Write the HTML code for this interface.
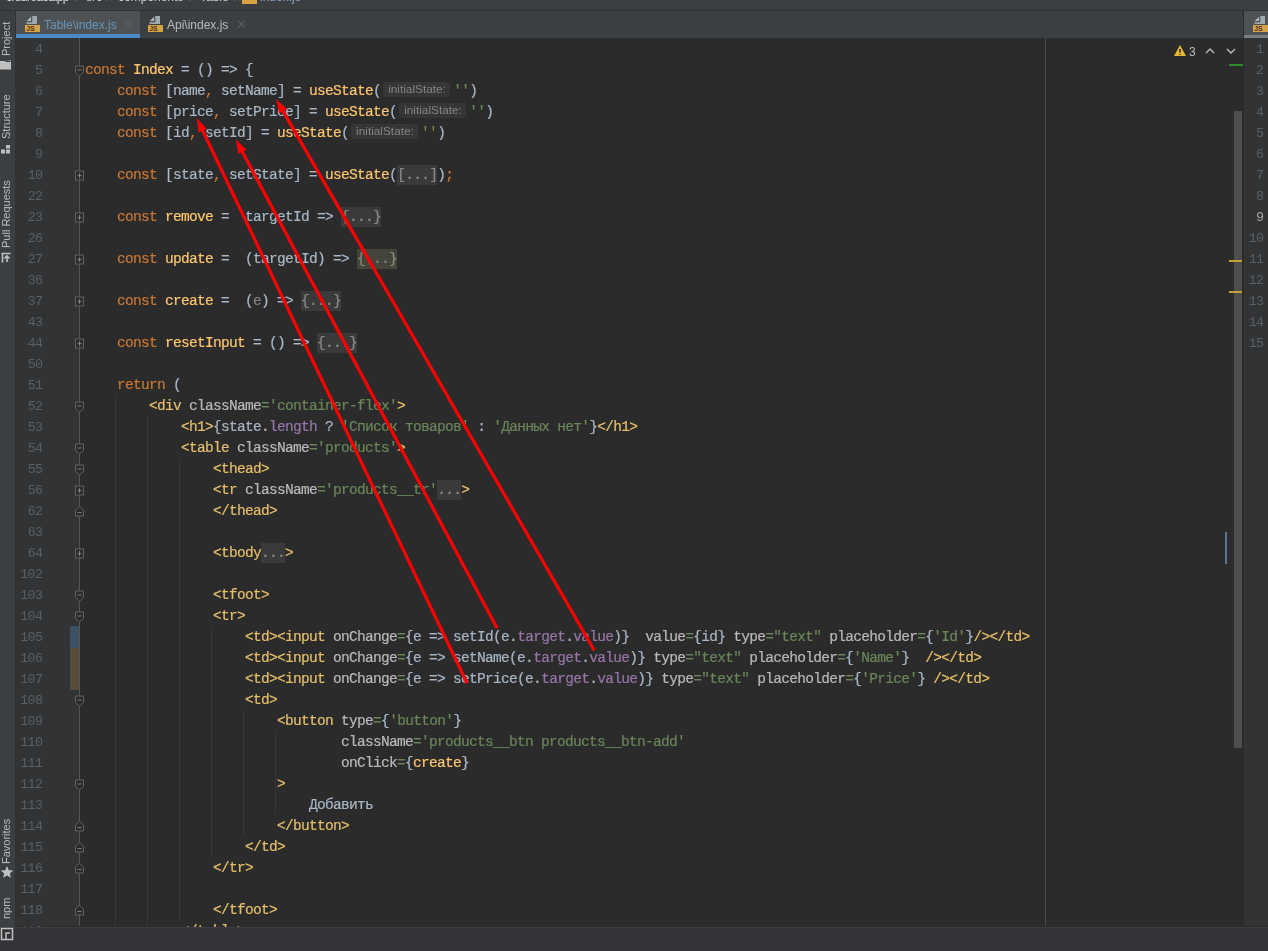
<!DOCTYPE html>
<html><head><meta charset="utf-8"><style>
*{margin:0;padding:0;box-sizing:border-box}
html,body{width:1268px;height:951px;overflow:hidden;background:#2B2B2B}
body{position:relative;font-family:"Liberation Sans",sans-serif} .ln,.num,.rnum,.tab,.side,.abs{will-change:transform}
.abs{position:absolute}
#top{left:0;top:0;width:1268px;height:11px;background:#3C3F41;border-bottom:1px solid #323232;overflow:hidden}
#tabs{left:15px;top:11px;width:1229px;height:27px;background:#3C3F41}
#left{left:0;top:11px;width:16px;height:940px;background:#3C3F41;border-right:1px solid #323232}
#status{left:0;top:927px;width:1268px;height:24px;background:#323437;border-top:1px solid #3A3C3F}
#gutter{left:15px;top:38px;width:64px;height:888px;background:#313335}
#rpane{left:1243px;top:11px;width:25px;height:915px;background:#313335;border-left:1px solid #2B2B2B}
.ln{position:absolute;left:85px;-webkit-text-stroke:0.2px currentColor;height:21px;line-height:21px;white-space:pre;font-family:"Liberation Mono",monospace;font-size:14.5px;letter-spacing:-0.7px}
.num{position:absolute;left:15px;width:27.2px;text-align:right;height:21px;line-height:21px;font-family:"Liberation Mono",monospace;font-size:13.3px;letter-spacing:-0.7px;color:#5C5F61}
.rnum{position:absolute;left:1244px;width:19.3px;text-align:right;height:21px;line-height:21px;font-family:"Liberation Mono",monospace;font-size:13.3px;letter-spacing:-0.7px;color:#5C5F61}
.rnum.cur{color:#A4A3A3}
.k{color:#CC7832} .d{color:#A9B7C6} .f{color:#FFC66D} .s{color:#6A8759} .p{color:#9876AA}
.t{color:#E8BF6A} .a{color:#BABABA} .eq{color:#6A8759} .u{color:#808080}
.fo,.fy{display:inline-block;height:20px;line-height:20px;vertical-align:top} .fo{background:#3A3A3A;color:#8A8A8A}
.fy{background:#45443A;color:#8A8A7A}
.hint{display:inline-block;width:72px;height:21px;vertical-align:top;position:relative}
.hint i{position:absolute;left:2px;top:1px;width:67px;height:15px;line-height:15px;background:#363636;color:#858585;font-style:normal;font-family:"Liberation Sans",sans-serif;font-size:11.8px;letter-spacing:0;padding-left:5px;border-radius:3px;-webkit-text-stroke:0}
.tab{position:absolute;top:12px;height:27px;font-size:12px;line-height:27px}
.side{position:absolute;left:0;width:15px;font-size:11px;color:#BBBBBB;white-space:nowrap}
.side span{position:absolute;transform:rotate(-90deg);transform-origin:0 0;left:0px}
.ic{position:absolute}
</style></head><body>
<div id="top" class="abs"></div>
<div class="abs" style="left:6px;top:-9px;font-size:12px;line-height:12px;color:#D8D8D8;letter-spacing:-0.6px;white-space:pre">crudreactapp</div>
<div class="abs" style="left:75px;top:-9px;font-size:13px;line-height:12px;color:#6A6D70">/</div>
<div class="abs" style="left:86px;top:-9px;font-size:12px;line-height:12px;color:#D0D0D0">src</div>
<div class="abs" style="left:106px;top:-9px;font-size:13px;line-height:12px;color:#6A6D70">/</div>
<div class="abs" style="left:118px;top:-9px;font-size:12px;line-height:12px;color:#D0D0D0">components</div>
<div class="abs" style="left:189px;top:-9px;font-size:13px;line-height:12px;color:#6A6D70">/</div>
<div class="abs" style="left:200px;top:-9px;font-size:12px;line-height:12px;color:#D0D0D0">Table</div>
<div class="abs" style="left:234px;top:-9px;font-size:13px;line-height:12px;color:#6A6D70">/</div>
<div class="abs" style="left:242px;top:-6px;width:15px;height:10px;background:#D9A440"></div>
<div class="abs" style="left:260px;top:-9px;font-size:12px;line-height:12px;color:#8AA8C8">index.js</div>
<div id="tabs" class="abs"></div>
<div id="gutter" class="abs"></div>
<div id="rpane" class="abs"></div>
<div id="left" class="abs"></div>

<!-- active tab -->
<div class="abs" style="left:16px;top:11px;width:124px;height:27px;background:#4E5254"></div>
<div class="abs" style="left:16px;top:34px;width:124px;height:4px;background:#4A88C7"></div>
<svg class="ic" style="left:25px;top:16px" width="16" height="16" viewBox="0 0 16 16"><path d="M7 0H12V8H1.5V5.8H7z" fill="#9DA9B1"/><path d="M1.5 5.3L6.3 0.5V5.3z" fill="#AEB8BE"/><path d="M6.8 0.3V5.8H1.3" stroke="#40464A" stroke-width="0.9" fill="none"/><rect x="0" y="9" width="15" height="7" fill="#D5A24A"/><text x="1.2" y="15" font-family="Liberation Sans" font-size="6.8" font-weight="bold" fill="#4A3210">JS</text></svg>
<div class="tab" style="left:44px;color:#6897BB">Table\index.js</div>
<div class="tab" style="left:123px;top:11px;color:#5A5D60;font-size:13px">&#x2715;</div>
<svg class="ic" style="left:148px;top:16px" width="16" height="16" viewBox="0 0 16 16"><path d="M7 0H12V8H1.5V5.8H7z" fill="#9DA9B1"/><path d="M1.5 5.3L6.3 0.5V5.3z" fill="#AEB8BE"/><path d="M6.8 0.3V5.8H1.3" stroke="#40464A" stroke-width="0.9" fill="none"/><rect x="0" y="9" width="15" height="7" fill="#D5A24A"/><text x="1.2" y="15" font-family="Liberation Sans" font-size="6.8" font-weight="bold" fill="#4A3210">JS</text></svg>
<div class="tab" style="left:167px;color:#BBBBBB">Api\index.js</div>
<div class="tab" style="left:236px;top:11px;color:#5A5D60;font-size:13px">&#x2715;</div>

<!-- right pane tab -->
<div class="abs" style="left:1244px;top:11px;width:24px;height:27px;background:#4E5254"></div>
<div class="abs" style="left:1244px;top:35px;width:24px;height:3px;background:#7B7E80"></div>
<svg class="ic" style="left:1253px;top:16px" width="16" height="16" viewBox="0 0 16 16"><path d="M7 0H12V8H1.5V5.8H7z" fill="#9DA9B1"/><path d="M1.5 5.3L6.3 0.5V5.3z" fill="#AEB8BE"/><path d="M6.8 0.3V5.8H1.3" stroke="#40464A" stroke-width="0.9" fill="none"/><rect x="0" y="9" width="15" height="7" fill="#D5A24A"/><text x="1.2" y="15" font-family="Liberation Sans" font-size="6.8" font-weight="bold" fill="#4A3210">JS</text></svg>

<div class="num" style="top:39px">4</div><div class="num" style="top:60px">5</div><div class="num" style="top:81px">6</div><div class="num" style="top:102px">7</div><div class="num" style="top:123px">8</div><div class="num" style="top:144px">9</div><div class="num" style="top:165px">10</div><div class="num" style="top:186px">22</div><div class="num" style="top:207px">23</div><div class="num" style="top:228px">26</div><div class="num" style="top:249px">27</div><div class="num" style="top:270px">36</div><div class="num" style="top:291px">37</div><div class="num" style="top:312px">43</div><div class="num" style="top:333px">44</div><div class="num" style="top:354px">50</div><div class="num" style="top:375px">51</div><div class="num" style="top:396px">52</div><div class="num" style="top:417px">53</div><div class="num" style="top:438px">54</div><div class="num" style="top:459px">55</div><div class="num" style="top:480px">56</div><div class="num" style="top:501px">62</div><div class="num" style="top:522px">63</div><div class="num" style="top:543px">64</div><div class="num" style="top:564px">102</div><div class="num" style="top:585px">103</div><div class="num" style="top:606px">104</div><div class="num" style="top:627px">105</div><div class="num" style="top:648px">106</div><div class="num" style="top:669px">107</div><div class="num" style="top:690px">108</div><div class="num" style="top:711px">109</div><div class="num" style="top:732px">110</div><div class="num" style="top:753px">111</div><div class="num" style="top:774px">112</div><div class="num" style="top:795px">113</div><div class="num" style="top:816px">114</div><div class="num" style="top:837px">115</div><div class="num" style="top:858px">116</div><div class="num" style="top:879px">117</div><div class="num" style="top:900px">118</div><div class="num" style="top:921px">119</div>
<div class="rnum" style="top:39px">1</div><div class="rnum" style="top:60px">2</div><div class="rnum" style="top:81px">3</div><div class="rnum" style="top:102px">4</div><div class="rnum" style="top:123px">5</div><div class="rnum" style="top:144px">6</div><div class="rnum" style="top:165px">7</div><div class="rnum" style="top:186px">8</div><div class="rnum cur" style="top:207px">9</div><div class="rnum" style="top:228px">10</div><div class="rnum" style="top:249px">11</div><div class="rnum" style="top:270px">12</div><div class="rnum" style="top:291px">13</div><div class="rnum" style="top:312px">14</div><div class="rnum" style="top:333px">15</div>
<svg class="abs" style="left:0;top:0" width="1268" height="951">
<path d="M79.5 38V926" stroke="#555555"/>
<path d="M1045.5 38V926" stroke="#4A4A4A"/>
<path d="M115.5 395V941" stroke="#373737"/><path d="M147.5 416V941" stroke="#373737"/><path d="M179.5 458V920" stroke="#373737"/><path d="M211.5 626V857" stroke="#373737"/><path d="M243.5 710V836" stroke="#373737"/><path d="M275.5 731V815" stroke="#373737"/>
<path d="M75.5 66.0h8v6.5l-4 3.7l-4 -3.7z" fill="#2B2B2B" stroke="#626262"/><path d="M77.5 70.0h4" stroke="#7E7E7E"/><rect x="75.5" y="171.0" width="8" height="9" fill="#2B2B2B" stroke="#626262"/><path d="M77.5 175.5h4M79.5 173.0v5" stroke="#7E7E7E"/><rect x="75.5" y="213.0" width="8" height="9" fill="#2B2B2B" stroke="#626262"/><path d="M77.5 217.5h4M79.5 215.0v5" stroke="#7E7E7E"/><rect x="75.5" y="255.0" width="8" height="9" fill="#2B2B2B" stroke="#626262"/><path d="M77.5 259.5h4M79.5 257.0v5" stroke="#7E7E7E"/><rect x="75.5" y="297.0" width="8" height="9" fill="#2B2B2B" stroke="#626262"/><path d="M77.5 301.5h4M79.5 299.0v5" stroke="#7E7E7E"/><rect x="75.5" y="339.0" width="8" height="9" fill="#2B2B2B" stroke="#626262"/><path d="M77.5 343.5h4M79.5 341.0v5" stroke="#7E7E7E"/><path d="M75.5 402.0h8v6.5l-4 3.7l-4 -3.7z" fill="#2B2B2B" stroke="#626262"/><path d="M77.5 406.0h4" stroke="#7E7E7E"/><path d="M75.5 444.0h8v6.5l-4 3.7l-4 -3.7z" fill="#2B2B2B" stroke="#626262"/><path d="M77.5 448.0h4" stroke="#7E7E7E"/><path d="M75.5 465.0h8v6.5l-4 3.7l-4 -3.7z" fill="#2B2B2B" stroke="#626262"/><path d="M77.5 469.0h4" stroke="#7E7E7E"/><rect x="75.5" y="486.0" width="8" height="9" fill="#2B2B2B" stroke="#626262"/><path d="M77.5 490.5h4M79.5 488.0v5" stroke="#7E7E7E"/><path d="M75.5 516.0h8v-6l-4 -3.7l-4 3.7z" fill="#2B2B2B" stroke="#626262"/><path d="M77.5 512.5h4" stroke="#7E7E7E"/><rect x="75.5" y="549.0" width="8" height="9" fill="#2B2B2B" stroke="#626262"/><path d="M77.5 553.5h4M79.5 551.0v5" stroke="#7E7E7E"/><path d="M75.5 591.0h8v6.5l-4 3.7l-4 -3.7z" fill="#2B2B2B" stroke="#626262"/><path d="M77.5 595.0h4" stroke="#7E7E7E"/><path d="M75.5 612.0h8v6.5l-4 3.7l-4 -3.7z" fill="#2B2B2B" stroke="#626262"/><path d="M77.5 616.0h4" stroke="#7E7E7E"/><path d="M75.5 696.0h8v6.5l-4 3.7l-4 -3.7z" fill="#2B2B2B" stroke="#626262"/><path d="M77.5 700.0h4" stroke="#7E7E7E"/><path d="M75.5 780.0h8v6.5l-4 3.7l-4 -3.7z" fill="#2B2B2B" stroke="#626262"/><path d="M77.5 784.0h4" stroke="#7E7E7E"/><path d="M75.5 831.0h8v-6l-4 -3.7l-4 3.7z" fill="#2B2B2B" stroke="#626262"/><path d="M77.5 827.5h4" stroke="#7E7E7E"/><path d="M75.5 852.0h8v-6l-4 -3.7l-4 3.7z" fill="#2B2B2B" stroke="#626262"/><path d="M77.5 848.5h4" stroke="#7E7E7E"/><path d="M75.5 873.0h8v-6l-4 -3.7l-4 3.7z" fill="#2B2B2B" stroke="#626262"/><path d="M77.5 869.5h4" stroke="#7E7E7E"/><path d="M75.5 915.0h8v-6l-4 -3.7l-4 3.7z" fill="#2B2B2B" stroke="#626262"/><path d="M77.5 911.5h4" stroke="#7E7E7E"/>
<rect x="70" y="626" width="9" height="22" fill="#3B5063"/>
<rect x="70" y="648" width="9" height="42" fill="#574D3A"/>
<rect x="1234" y="111" width="8" height="637" fill="#4E4E4E"/>
<rect x="1229" y="64" width="14" height="2" fill="#2E8B2E"/>
<rect x="1229" y="260" width="13" height="2" fill="#C9A33A"/>
<rect x="1229" y="291" width="13" height="2" fill="#C9A33A"/>
<rect x="1225" y="532" width="2" height="32" fill="#557596"/>
<path d="M1180 45l6 11h-12z" fill="#E8B830"/><path d="M1180 49v3.5M1180 54v1" stroke="#2B2B2B" stroke-width="1.6"/>
<path d="M1206 53l4-4l4 4M1227 49l4 4l4-4" stroke="#BBBBBB" stroke-width="1.4" fill="none"/>
</svg>
<div class="abs" style="left:1189px;top:45px;font-size:12px;color:#BBBBBB;line-height:14px">3</div>

<div class="ln" style="top:60px"><span class="k">const</span><span class="d"> </span><span class="f">Index</span><span class="d"> = </span><span class="d">()</span><span class="d"> =&gt; {</span></div><div class="ln" style="top:81px"><span class="d">    </span><span class="k">const</span><span class="d"> [name</span><span class="k">,</span><span class="d"> setName] = </span><span class="f">useState</span><span class="d">(</span><span class="hint"><i>initialState:</i></span><span class="s">&#x27;&#x27;</span><span class="d">)</span></div><div class="ln" style="top:102px"><span class="d">    </span><span class="k">const</span><span class="d"> [price</span><span class="k">,</span><span class="d"> setPrice] = </span><span class="f">useState</span><span class="d">(</span><span class="hint"><i>initialState:</i></span><span class="s">&#x27;&#x27;</span><span class="d">)</span></div><div class="ln" style="top:123px"><span class="d">    </span><span class="k">const</span><span class="d"> [id</span><span class="k">,</span><span class="d"> setId] = </span><span class="f">useState</span><span class="d">(</span><span class="hint"><i>initialState:</i></span><span class="s">&#x27;&#x27;</span><span class="d">)</span></div><div class="ln" style="top:165px"><span class="d">    </span><span class="k">const</span><span class="d"> [state</span><span class="k">,</span><span class="d"> setState] = </span><span class="f">useState</span><span class="d">(</span><span class="fo">[...]</span><span class="d">)</span><span class="k">;</span></div><div class="ln" style="top:207px"><span class="d">    </span><span class="k">const</span><span class="d"> </span><span class="f">remove</span><span class="d"> =  targetId =&gt; </span><span class="fo">{...}</span></div><div class="ln" style="top:249px"><span class="d">    </span><span class="k">const</span><span class="d"> </span><span class="f">update</span><span class="d"> =  (targetId) =&gt; </span><span class="fy">{...}</span></div><div class="ln" style="top:291px"><span class="d">    </span><span class="k">const</span><span class="d"> </span><span class="f">create</span><span class="d"> =  (</span><span class="u">e</span><span class="d">) =&gt; </span><span class="fo">{...}</span></div><div class="ln" style="top:333px"><span class="d">    </span><span class="k">const</span><span class="d"> </span><span class="f">resetInput</span><span class="d"> = () =&gt; </span><span class="fo">{...}</span></div><div class="ln" style="top:375px"><span class="d">    </span><span class="k">return</span><span class="d"> (</span></div><div class="ln" style="top:396px"><span class="d">        </span><span class="t">&lt;div</span><span class="d"> </span><span class="a">className</span><span class="eq">=</span><span class="s">&#x27;container-flex&#x27;</span><span class="t">&gt;</span></div><div class="ln" style="top:417px"><span class="d">            </span><span class="t">&lt;h1&gt;</span><span class="d">{state.</span><span class="p">length</span><span class="d"> ? </span><span class="s">&#x27;Список товаров&#x27;</span><span class="d"> : </span><span class="s">&#x27;Данных нет&#x27;</span><span class="d">}</span><span class="t">&lt;/h1&gt;</span></div><div class="ln" style="top:438px"><span class="d">            </span><span class="t">&lt;table</span><span class="d"> </span><span class="a">className</span><span class="eq">=</span><span class="s">&#x27;products&#x27;</span><span class="t">&gt;</span></div><div class="ln" style="top:459px"><span class="d">                </span><span class="t">&lt;thead&gt;</span></div><div class="ln" style="top:480px"><span class="d">                </span><span class="t">&lt;tr</span><span class="d"> </span><span class="a">className</span><span class="eq">=</span><span class="s">&#x27;products__tr&#x27;</span><span class="fo">...</span><span class="t">&gt;</span></div><div class="ln" style="top:501px"><span class="d">                </span><span class="t">&lt;/thead&gt;</span></div><div class="ln" style="top:543px"><span class="d">                </span><span class="t">&lt;tbody</span><span class="fo">...</span><span class="t">&gt;</span></div><div class="ln" style="top:585px"><span class="d">                </span><span class="t">&lt;tfoot&gt;</span></div><div class="ln" style="top:606px"><span class="d">                </span><span class="t">&lt;tr&gt;</span></div><div class="ln" style="top:627px"><span class="d">                    </span><span class="t">&lt;td&gt;&lt;input</span><span class="d"> </span><span class="a">onChange</span><span class="eq">=</span><span class="d">{e =&gt; setId(e.</span><span class="p">target</span><span class="d">.</span><span class="p">value</span><span class="d">)}  </span><span class="a">value</span><span class="eq">=</span><span class="d">{id} </span><span class="a">type</span><span class="eq">=</span><span class="s">&quot;text&quot;</span><span class="d"> </span><span class="a">placeholder</span><span class="eq">=</span><span class="d">{</span><span class="s">&#x27;Id&#x27;</span><span class="d">}</span><span class="t">/&gt;&lt;/td&gt;</span></div><div class="ln" style="top:648px"><span class="d">                    </span><span class="t">&lt;td&gt;&lt;input</span><span class="d"> </span><span class="a">onChange</span><span class="eq">=</span><span class="d">{e =&gt; setName(e.</span><span class="p">target</span><span class="d">.</span><span class="p">value</span><span class="d">)} </span><span class="a">type</span><span class="eq">=</span><span class="s">&quot;text&quot;</span><span class="d"> </span><span class="a">placeholder</span><span class="eq">=</span><span class="d">{</span><span class="s">&#x27;Name&#x27;</span><span class="d">}  </span><span class="t">/&gt;&lt;/td&gt;</span></div><div class="ln" style="top:669px"><span class="d">                    </span><span class="t">&lt;td&gt;&lt;input</span><span class="d"> </span><span class="a">onChange</span><span class="eq">=</span><span class="d">{e =&gt; setPrice(e.</span><span class="p">target</span><span class="d">.</span><span class="p">value</span><span class="d">)} </span><span class="a">type</span><span class="eq">=</span><span class="s">&quot;text&quot;</span><span class="d"> </span><span class="a">placeholder</span><span class="eq">=</span><span class="d">{</span><span class="s">&#x27;Price&#x27;</span><span class="d">} </span><span class="t">/&gt;&lt;/td&gt;</span></div><div class="ln" style="top:690px"><span class="d">                    </span><span class="t">&lt;td&gt;</span></div><div class="ln" style="top:711px"><span class="d">                        </span><span class="t">&lt;button</span><span class="d"> </span><span class="a">type</span><span class="eq">=</span><span class="d">{</span><span class="s">&#x27;button&#x27;</span><span class="d">}</span></div><div class="ln" style="top:732px"><span class="d">                                </span><span class="a">className</span><span class="eq">=</span><span class="s">&#x27;products__btn products__btn-add&#x27;</span></div><div class="ln" style="top:753px"><span class="d">                                </span><span class="a">onClick</span><span class="eq">=</span><span class="d">{</span><span class="f">create</span><span class="d">}</span></div><div class="ln" style="top:774px"><span class="d">                        </span><span class="t">&gt;</span></div><div class="ln" style="top:795px"><span class="d">                            Добавить</span></div><div class="ln" style="top:816px"><span class="d">                        </span><span class="t">&lt;/button&gt;</span></div><div class="ln" style="top:837px"><span class="d">                    </span><span class="t">&lt;/td&gt;</span></div><div class="ln" style="top:858px"><span class="d">                </span><span class="t">&lt;/tr&gt;</span></div><div class="ln" style="top:900px"><span class="d">                </span><span class="t">&lt;/tfoot&gt;</span></div><div class="ln" style="top:921px"><span class="d">            </span><span class="t">&lt;/table&gt;</span></div>
<div id="status" class="abs"></div>

<div class="side" style="top:56px"><span style="top:0">Project</span></div>
<svg class="abs" style="left:0;top:0" width="15" height="951">
<path d="M0 61h11v8.5H0z M5 61h6v-0.5" fill="#C0C0C0"/><path d="M5.5 61.5h5" stroke="#3C3F41" stroke-width="1"/>
<rect x="6" y="145" width="4" height="3.5" fill="#C0C0C0"/><rect x="1" y="149.5" width="4" height="4" fill="#C0C0C0"/><rect x="6" y="149.5" width="4" height="4" fill="#C0C0C0"/>
<path d="M1.5 253.5h9M2.5 253.5v9M7 262v-6M4.5 258.5l2.5-2.5l2.5 2.5" stroke="#C0C0C0" stroke-width="1.6" fill="none"/>
<path d="M7 866l1.8 4.2l4.5 .3l-3.5 2.9l1.1 4.4l-3.9-2.4l-3.9 2.4l1.1-4.4l-3.5-2.9l4.5-.3z" fill="#C0C0C0"/>
<rect x="1.5" y="928.5" width="11" height="11" fill="none" stroke="#C0C0C0" stroke-width="1.5"/><path d="M6 939v-6h4" stroke="#C0C0C0" stroke-width="1.5" fill="none"/>
</svg>
<div class="side" style="top:139px"><span>Structure</span></div>
<div class="side" style="top:248px"><span>Pull Requests</span></div>
<div class="side" style="top:864px"><span>Favorites</span></div>
<div class="side" style="top:919px"><span>npm</span></div>

<!-- red arrows -->
<svg class="abs" style="left:0;top:0" width="1268" height="951">
<path d="M593.5 649.0L282.0 109.4" stroke="#F00" stroke-width="3.2" stroke-linecap="round"/><path d="M276.0 99.0L286.9 108.9L279.1 113.4z" fill="#F00"/><path d="M466.5 682.0L201.8 128.8" stroke="#F00" stroke-width="3.2" stroke-linecap="round"/><path d="M196.6 118.0L206.7 128.7L198.6 132.6z" fill="#F00"/><path d="M496.5 627.0L241.5 150.2" stroke="#F00" stroke-width="3.2" stroke-linecap="round"/><path d="M235.8 139.6L246.4 149.8L238.4 154.1z" fill="#F00"/>
</svg>
</body></html>
